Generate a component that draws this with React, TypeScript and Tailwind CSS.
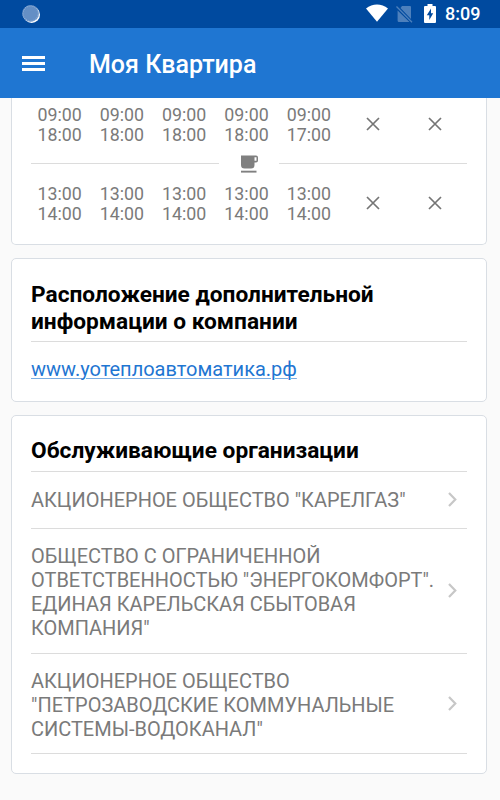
type DayHours = {
  from: string;
  to: string;
} | null;

const workHours: DayHours[] = [
  { from: "09:00", to: "18:00" },
  { from: "09:00", to: "18:00" },
  { from: "09:00", to: "18:00" },
  { from: "09:00", to: "18:00" },
  { from: "09:00", to: "17:00" },
  null,
  null,
];

const breakHours: DayHours[] = [
  { from: "13:00", to: "14:00" },
  { from: "13:00", to: "14:00" },
  { from: "13:00", to: "14:00" },
  { from: "13:00", to: "14:00" },
  { from: "13:00", to: "14:00" },
  null,
  null,
];

const organizations = [
  { lines: ['АКЦИОНЕРНОЕ ОБЩЕСТВО "КАРЕЛГАЗ"'], height: "h-[57px]" },
  {
    lines: [
      "ОБЩЕСТВО С ОГРАНИЧЕННОЙ",
      'ОТВЕТСТВЕННОСТЬЮ "ЭНЕРГОКОМФОРТ".',
      "ЕДИНАЯ КАРЕЛЬСКАЯ СБЫТОВАЯ",
      'КОМПАНИЯ"',
    ],
    height: "h-[125px] pt-px",
  },
  {
    lines: ["АКЦИОНЕРНОЕ ОБЩЕСТВО", '"ПЕТРОЗАВОДСКИЕ КОММУНАЛЬНЫЕ', 'СИСТЕМЫ-ВОДОКАНАЛ"'],
    height: "h-[100px] pt-[2px]",
  },
];

export default function App() {
  return (
    <div className="flex h-[800px] w-[500px] flex-col overflow-hidden bg-[#fafafa] font-['Roboto',sans-serif]">
      <StatusBar />
      <AppBar />
      <main className="flex min-h-0 flex-1 flex-col gap-[13px] pr-[13px] pl-[11px]">
        <section className="h-[147px] shrink-0 rounded-b-[5px] border border-t-0 border-[#d9dee4] bg-white px-[19px] pt-[7px]">
          <HoursRow days={workHours} />
          <div className="flex h-[39px] items-center pb-[2px]">
            <div className="h-px flex-1 bg-[#dcdcdc]" />
            <CupIcon />
            <div className="h-px flex-1 bg-[#dcdcdc]" />
          </div>
          <HoursRow days={breakHours} />
        </section>

        <section className="h-[144px] shrink-0 rounded-[5px] border border-[#d9dee4] bg-white px-[19px] pt-[23px]">
          <h2 className="h-[60px] border-b border-[#dcdcdc] text-[22.7px] leading-[26.5px] font-bold whitespace-nowrap text-black">
            Расположение дополнительной
            <br />
            информации о компании
          </h2>
          <a href="#" className="mt-[15px] block text-[20px] leading-6 text-[#1f76d2] underline decoration-[#1f76d2]/60 decoration-1 underline-offset-2">
            www.уотеплоавтоматика.рф
          </a>
        </section>

        <section className="h-[359px] shrink-0 rounded-[5px] border border-[#d9dee4] bg-white px-[19px] pt-[21px]">
          <h2 className="h-[35px] border-b border-[#dcdcdc] text-[22.7px] leading-7 font-bold text-black">
            Обслуживающие организации
          </h2>
          {organizations.map((org) => (
            <div key={org.lines[0]} className={`flex items-center border-b border-[#dcdcdc] ${org.height}`}>
              <div className="flex-1 text-[19.98px] leading-6 whitespace-nowrap text-[#7a7a7a]">
                {org.lines.map((line) => (
                  <div key={line}>{line}</div>
                ))}
              </div>
              <svg className="mr-[10px] mb-[2px] h-[15px] w-[9px] shrink-0" viewBox="0 0 9 15" fill="none">
                <path d="M1 1L7.3 7.5L1 14" stroke="#c7c7c7" strokeWidth="2.2" />
              </svg>
            </div>
          ))}
        </section>
      </main>
    </div>
  );
}

function StatusBar() {
  return (
    <header className="flex h-7 shrink-0 items-center bg-[#004a9f] pr-[20px] pl-[22px] text-white">
      <svg className="h-[19px] w-[19px]" viewBox="0 0 19 19">
        <circle cx="9.7" cy="9.7" r="8.3" fill="#fff" />
        <circle cx="8.6" cy="8.5" r="8.3" fill="#648fc5" />
        <circle cx="8.6" cy="8.5" r="7.7" fill="none" stroke="#91b0d8" strokeWidth="1.3" strokeDasharray="1 1" />
      </svg>
      <div className="flex-1" />
      <svg className="mr-[-1px] mb-[2px] h-[18px] w-[22px]" viewBox="0 0 22 18">
        <path d="M0 4.5C6.5-.8 15.5-.8 22 4.5L11 17.8Z" fill="#fff" />
      </svg>
      <svg className="ml-[9px] h-[18px] w-[17px]" viewBox="0 0 17 18" fill="none">
        <path d="M6 1H14Q15 1 15 2V14L4.5 3ZM1.6 5.5L13.5 17H3Q1.6 17 1.6 15.5Z" fill="#4d80bc" />
        <path d="M.5 1.5L16 17.3" stroke="#4d80bc" strokeWidth="1.3" />
      </svg>
      <svg className="ml-[11px] mb-px h-[19px] w-[12px]" viewBox="0 0 12 19">
        <path d="M3.5 0H8.5V2H11Q12 2 12 3V18Q12 19 11 19H1Q0 19 0 18V3Q0 2 1 2H3.5Z" fill="#fff" />
        <path d="M7 4.5L2.8 11.3H5.3V16L9.2 9.2H7Z" fill="#004a9f" />
      </svg>
      <span className="ml-[9px] w-[35px] text-[18px] leading-none font-medium whitespace-nowrap">8:09</span>
    </header>
  );
}

function AppBar() {
  return (
    <div className="flex h-[70px] shrink-0 items-center bg-[#1f76d2] pl-[22px]">
      <button type="button" aria-label="Меню" className="flex w-[23px] flex-col gap-[3px]">
        <span className="h-[3px] w-full bg-white" />
        <span className="h-[3px] w-full bg-white" />
        <span className="h-[3px] w-full bg-white" />
      </button>
      <h1 className="ml-[44px] pt-[3px] text-[25px] leading-none font-medium text-white">Моя Квартира</h1>
    </div>
  );
}

function HoursRow({ days }: { days: DayHours[] }) {
  return (
    <div className="grid grid-cols-7 text-center text-[17.8px] leading-5 text-[#7a7a7a]">
      {days.map((day, i) =>
        day ? (
          <div key={i} className="-ml-[5px]">
            <div>{day.from}</div>
            <div>{day.to}</div>
          </div>
        ) : (
          <div key={i} className="flex items-center justify-center pr-px pb-[2px]">
            <svg className="h-[14px] w-[14px]" viewBox="0 0 14 14">
              <path d="M1 1L13 13M13 1L1 13" stroke="#757575" strokeWidth="1.7" />
            </svg>
          </div>
        ),
      )}
    </div>
  );
}

function CupIcon() {
  return (
    <svg className="mr-[21px] ml-[21px] h-[18px] w-[18px]" viewBox="0 0 18 18">
      <path
        d="M1 0.5H16Q18 .5 18 2.5V5.5Q18 7.5 16 7.5H14.5V10Q14.5 13.5 11 13.5H4.5Q1 13.5 1 10ZM14.5 2.3V5.7H16.5V2.3Z"
        fill="#808080"
        fillRule="evenodd"
      />
      <path d="M1 15.7H16.5V17.6H1Z" fill="#808080" />
    </svg>
  );
}
